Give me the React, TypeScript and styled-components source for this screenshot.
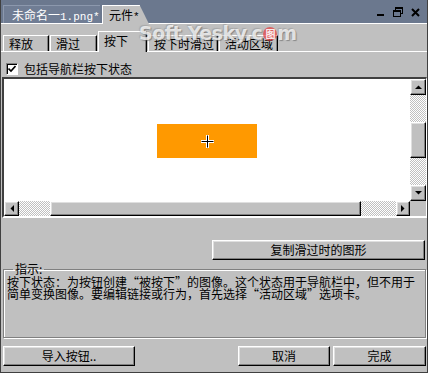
import React from 'react'
import styled, { createGlobalStyle, css } from 'styled-components'

const GlobalStyle = createGlobalStyle`
html, body {
    margin: 0;
    padding: 0;
    background: #c0c0c0;
}
* {
    box-sizing: border-box;
}
`

const cjk = `"Noto Sans CJK SC", "DejaVu Sans", sans-serif`

const raised = css`
background: #c0c0c0;
border: 1px solid;
border-color: #fff #000 #000 #fff;
box-shadow: inset -1px -1px #808080, inset 1px 1px #dfdfdf;
`

const Window = styled.div`
position: relative;
width: 428px;
height: 373px;
background: #c0c0c0;
border: 1px solid #404040;
border-top: none;
display: flex;
flex-direction: column;
font-family: ${cjk};
font-size: 12px;
color: #000;
overflow: hidden;
`

const TitleBar = styled.div`
height: 24px;
background: #6b788e;
border-bottom: 1px solid #fff;
display: flex;
align-items: flex-end;
padding-left: 2px;
`

const DocTab = styled.div<{ $active?: boolean }>`
height: ${p => (p.$active ? 19 : 18)}px;
width: ${p => (p.$active ? 47 : 97)}px;
margin-bottom: ${p => (p.$active ? -1 : 0)}px;
margin-left: ${p => (p.$active ? 2 : 0)}px;
padding-left: ${p => (p.$active ? 6 : 8)}px;
line-height: 18px;
white-space: nowrap;
color: ${p => (p.$active ? '#000' : '#fff')};
background: ${p => (p.$active ? '#c0c0c0' : '#707d94')};
border-top: 1px solid ${p => (p.$active ? '#fff' : '#8c98ad')};
border-left: 1px solid ${p => (p.$active ? '#fff' : '#8c98ad')};
clip-path: ${p => (p.$active ? 'polygon(0 0, 80% 0, 100% 100%, 0 100%)' : 'none')};
`

const Mono = styled.span`
font-family: "Liberation Mono", monospace;
font-size: 11px;
`

const Controls = styled.div`
margin-left: auto;
align-self: center;
display: flex;
align-items: center;
gap: 8px;
padding-right: 7px;
margin-top: 1px;
`

const StateTabBar = styled.div`
height: 28px;
display: flex;
align-items: flex-end;
padding-left: 2px;
border-bottom: 1px solid #fff;
`

const StateTab = styled.div<{ $w: number; $active?: boolean }>`
width: ${p => p.$w}px;
height: ${p => (p.$active ? 21 : 16)}px;
margin-bottom: ${p => (p.$active ? -1 : 0)}px;
margin-right: 1px;
padding-left: 5px;
padding-top: ${p => (p.$active ? 1 : 0)}px;
line-height: 15px;
white-space: nowrap;
background: #c0c0c0;
border-top: 1px solid #fff;
border-left: 1px solid #fff;
border-right: 1px solid #000;
box-shadow: inset -1px 0 #808080;
`

const CheckRow = styled.label`
height: 25px;
padding: 8px 0 0 5px;
display: flex;
align-items: center;
gap: 6px;
`

const CheckBox = styled.span`
width: 12px;
height: 12px;
background: #fff;
border: 1px solid;
border-color: #808080 #fff #fff #808080;
box-shadow: inset 1px 1px #000;
display: flex;
align-items: center;
justify-content: center;
`

const CanvasFrame = styled.div`
margin-left: 1px;
height: 141px;
border-style: solid;
border-width: 2px 1px 2px 2px;
border-color: #404040 #fff #fff #404040;
display: grid;
grid-template-columns: 1fr 16px;
grid-template-rows: 1fr 15px;
`

const Drawing = styled.div`
background: #fff;
display: flex;
align-items: center;
justify-content: center;
padding-top: 2px;
`

const Shape = styled.div`
width: 100px;
height: 34px;
background: #ff9900;
display: flex;
align-items: center;
justify-content: center;
`

const VScroll = styled.div`
display: flex;
flex-direction: column;
`

const HScroll = styled.div`
display: flex;
`

const Hatch = styled.div<{ $size?: number }>`
flex: ${p => (p.$size ? `0 0 ${p.$size}px` : '1')};
background-color: #fff;
background-image: repeating-conic-gradient(#c0c0c0 0% 25%, #fff 0% 50%);
background-size: 2px 2px;
`

const ScrollBtn = styled.div<{ $w: number; $h: number }>`
${raised}
flex: 0 0 auto;
width: ${p => p.$w}px;
height: ${p => p.$h}px;
display: flex;
align-items: center;
justify-content: center;
`

const Thumb = styled.div<{ $size: number }>`
${raised}
flex: 0 0 ${p => p.$size}px;
`

const Corner = styled.div`
background: #c0c0c0;
`

const CopyRow = styled.div`
margin-top: 22px;
display: flex;
justify-content: flex-end;
padding-right: 2px;
`

const Button = styled.button<{ $w: number }>`
${raised}
width: ${p => p.$w}px;
height: 20px;
padding: 0;
font-family: ${cjk};
font-size: 12px;
line-height: 16px;
color: #000;
`

const Group = styled.fieldset`
margin: 3px 1px 0 2px;
height: 75px;
padding: 0 3px 2px 3px;
border: 1px solid #808080;
box-shadow: inset 1px 1px #fff, 1px 1px #fff;
min-width: 0;
`

const Legend = styled.legend`
margin-left: 6px;
padding: 0 2px;
line-height: 12px;
`

const Hint = styled.div`
line-height: 12px;
margin-top: 1px;
`

const BottomRow = styled.div`
margin-top: auto;
display: flex;
align-items: center;
gap: 3px;
padding: 0 1px 6px 2px;
`

const Spacer = styled.div`
flex: 1;
`

const Watermark = styled.div`
position: absolute;
left: 138px;
top: 22px;
font-family: "DejaVu Sans", sans-serif;
font-weight: bold;
font-size: 19px;
line-height: 22px;
letter-spacing: -0.5px;
color: rgba(255, 255, 255, 0.75);
text-shadow: 1px 1px 1px rgba(90, 90, 90, 0.55), -1px -1px 1px rgba(120, 120, 120, 0.35);
pointer-events: none;
display: flex;
align-items: flex-end;
`

const Seal = styled.span`
display: inline-flex;
align-items: center;
justify-content: center;
width: 14px;
height: 14px;
margin: 0 0 3px 1px;
border-radius: 50%;
background: rgba(230, 60, 60, 0.7);
color: rgba(255, 255, 255, 0.9);
font-family: ${cjk};
font-size: 10px;
line-height: 14px;
text-shadow: none;
`

function Arrow(props: { dir: 'up' | 'down' | 'left' | 'right' }) {
    const pts = {
        up: '0,4 7,4 3.5,0.5',
        down: '0,0 7,0 3.5,3.5',
        left: '4,0 4,7 0.5,3.5',
        right: '0,0 0,7 3.5,3.5',
    }[props.dir]
    const vertical = props.dir === 'up' || props.dir === 'down'
    return (
        <svg width={vertical ? 7 : 4} height={vertical ? 4 : 7} viewBox={vertical ? '0 0 7 4' : '0 0 4 7'}>
            <polygon points={pts} fill="#000" />
        </svg>
    )
}

function WindowIcons() {
    return (
        <Controls>
            <svg width="8" height="10" viewBox="0 0 8 10">
                <rect x="0" y="7" width="7" height="2" fill="#000" />
            </svg>
            <svg width="10" height="10" viewBox="0 0 10 10">
                <rect x="2.5" y="0.5" width="7" height="6" fill="none" stroke="#000" />
                <rect x="2" y="0" width="8" height="2" fill="#000" />
                <rect x="0.5" y="3.5" width="7" height="6" fill="#6b788e" stroke="#000" />
                <rect x="0" y="3" width="8" height="2" fill="#000" />
            </svg>
            <svg width="9" height="9" viewBox="0 0 9 9">
                <path d="M1 1 L8 8 M8 1 L1 8" stroke="#000" strokeWidth="2" />
            </svg>
        </Controls>
    )
}

export default function App() {
    return (
        <>
            <GlobalStyle />
            <Window>
                <TitleBar>
                    <DocTab>未命名一<Mono>1.png*</Mono></DocTab>
                    <DocTab $active>元件<Mono>*</Mono></DocTab>
                    <WindowIcons />
                </TitleBar>
                <StateTabBar>
                    <StateTab $w={46}>释放</StateTab>
                    <StateTab $w={47}>滑过</StateTab>
                    <StateTab $w={49} $active>按下</StateTab>
                    <StateTab $w={70}>按下时滑过</StateTab>
                    <StateTab $w={59}>活动区域</StateTab>
                </StateTabBar>
                <CheckRow>
                    <CheckBox>
                        <svg width="8" height="8" viewBox="0 0 8 8">
                            <path d="M0.5 3.5 L3 6 L7.5 1" stroke="#000" strokeWidth="1.6" fill="none" />
                        </svg>
                    </CheckBox>
                    包括导航栏按下状态
                </CheckRow>
                <CanvasFrame>
                    <Drawing>
                        <Shape>
                            <svg width="13" height="13" viewBox="0 0 13 13">
                                <path d="M6.5 0 V13 M0 6.5 H13" stroke="#fff" strokeWidth="3" />
                                <path d="M6.5 0.5 V12.5 M0.5 6.5 H12.5" stroke="#000" strokeWidth="1" />
                            </svg>
                        </Shape>
                    </Drawing>
                    <VScroll>
                        <ScrollBtn $w={16} $h={16}><Arrow dir="up" /></ScrollBtn>
                        <Hatch $size={27} />
                        <Thumb $size={36} />
                        <Hatch />
                        <ScrollBtn $w={16} $h={16}><Arrow dir="down" /></ScrollBtn>
                    </VScroll>
                    <HScroll>
                        <ScrollBtn $w={15} $h={15}><Arrow dir="left" /></ScrollBtn>
                        <Hatch $size={31} />
                        <Thumb $size={311} />
                        <Hatch />
                        <ScrollBtn $w={14} $h={15}><Arrow dir="right" /></ScrollBtn>
                    </HScroll>
                    <Corner />
                </CanvasFrame>
                <CopyRow>
                    <Button $w={213}>复制滑过时的图形</Button>
                </CopyRow>
                <Group>
                    <Legend>指示:</Legend>
                    <Hint>按下状态：为按钮创建“被按下”的图像。这个状态用于导航栏中，但不用于简单变换图像。要编辑链接或行为，首先选择“活动区域”选项卡。</Hint>
                </Group>
                <BottomRow>
                    <Button $w={132}>导入按钮..</Button>
                    <Spacer />
                    <Button $w={92}>取消</Button>
                    <Button $w={93}>完成</Button>
                </BottomRow>
                <Watermark>Soft.Yesky.c<Seal>图</Seal>m</Watermark>
            </Window>
        </>
    )
}
